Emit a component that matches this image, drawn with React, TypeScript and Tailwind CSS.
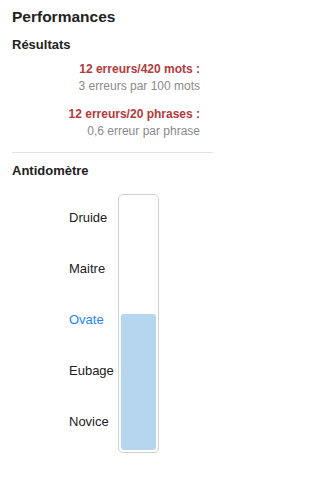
import React from 'react';

const levels = [
  { name: 'Druide', active: false },
  { name: 'Maitre', active: false },
  { name: 'Ovate', active: true },
  { name: 'Eubage', active: false },
  { name: 'Novice', active: false },
];

const stats = [
  { main: '12 erreurs/420 mots :', sub: '3 erreurs par 100 mots' },
  { main: '12 erreurs/20 phrases :', sub: '0,6 erreur par phrase' },
];

export default function App() {
  return (
    <div
      className="w-[222px] h-[486px] bg-white text-[#222] px-3 pt-[8px]"
      style={{ fontFamily: '"Liberation Sans", Arial, sans-serif' }}
    >
      <h1 className="text-[15.5px] leading-[18px] font-bold">Performances</h1>

      <h2 className="mt-[11px] text-[13px] leading-[16px] font-bold">Résultats</h2>

      {/* Stats */}
      <div className="flex flex-col items-end pr-[10px] mt-[9px] gap-[14px]">
        {stats.map((s) => (
          <div key={s.main} className="flex flex-col items-end gap-[3px]">
            <span className="text-[12px] leading-[14px] font-bold text-[#b23b3b]">{s.main}</span>
            <span className="text-[12px] leading-[14px] text-[#8a8a8a]">{s.sub}</span>
          </div>
        ))}
      </div>

      <div className="mt-[14px] h-px bg-[#e4e4e4] mr-[-3px]" />

      <h2 className="mt-[10px] text-[13px] leading-[16px] font-bold">Antidomètre</h2>

      {/* Gauge */}
      <div className="flex mt-[15px] pl-[57px]">
        <div className="w-[49px] flex flex-col pt-[16px] gap-[35px]">
          {levels.map((l) => (
            <span
              key={l.name}
              className={`text-[13px] leading-[16px] ${l.active ? 'text-[#1e85fb]' : 'text-[#222]'}`}
            >
              {l.name}
            </span>
          ))}
        </div>
        <div className="w-[41px] h-[259px] border border-[#d2d2d2] rounded-[5px] p-[2px] flex flex-col justify-end">
          <div className="h-[136px] bg-[#b6d6ef] rounded-[3px]" />
        </div>
      </div>
    </div>
  );
}
